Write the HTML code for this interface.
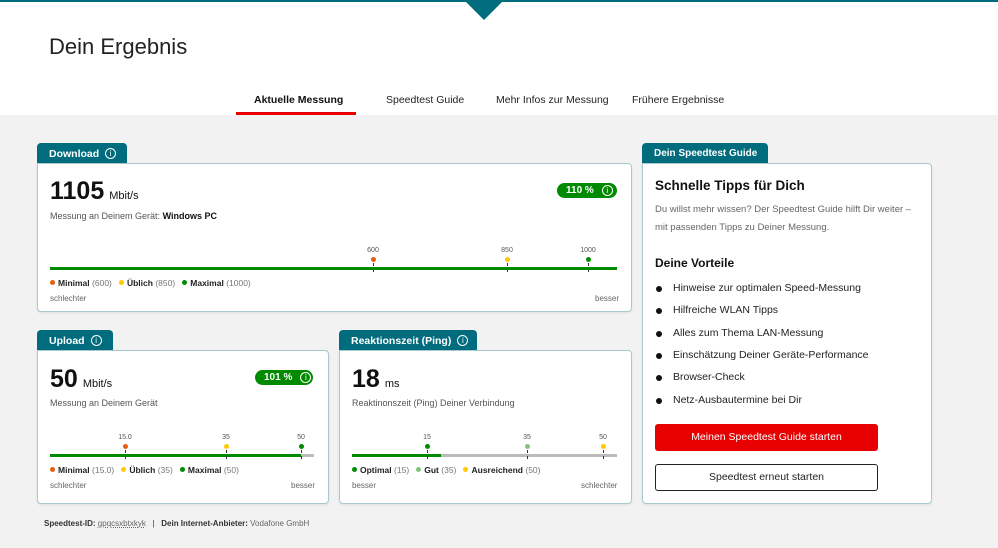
<!DOCTYPE html>
<html><head><meta charset="utf-8"><style>
*{margin:0;padding:0;box-sizing:border-box}
body{width:998px;height:548px;position:relative;background:#fff;font-family:"Liberation Sans",sans-serif;color:#222;overflow:hidden}
.a{position:absolute;white-space:nowrap}
.tab{position:absolute;background:#006c7d;color:#fff;font-weight:bold;font-size:10.5px;height:21px;display:flex;align-items:center;padding-left:12px;border-radius:4px 4px 0 0;white-space:nowrap}
.card{position:absolute;background:#fff;border:1px solid #a9c9cd;border-radius:0 4px 4px 4px;box-shadow:0 1px 2px rgba(0,0,0,.08)}
.i{display:inline-block;width:11px;height:11px;border:1px solid currentColor;border-radius:50%;font-size:8px;line-height:9px;text-align:center;font-weight:normal;margin-left:6px;flex:none}
.big{font-size:25px;font-weight:bold;color:#111}
.unit{font-size:11px;font-weight:normal;margin-left:5px}
.sub{font-size:9px;color:#555}
.badge{position:absolute;background:#008a00;color:#fff;border-radius:8px;font-size:10px;height:15px;display:flex;align-items:center;padding-left:9px;font-weight:bold;white-space:nowrap}
.lbl{font-size:7px;color:#555;transform:translateX(-50%)}
.dot{position:absolute;width:5px;height:5px;border-radius:50%}
.tick{position:absolute;width:1px;height:9px;border-left:1px dashed #333}
.leg{font-size:8.5px;color:#222}
.leg b{font-weight:bold}.leg span{color:#777}
.leg i{display:inline-block;width:5px;height:5px;border-radius:50%;margin-right:3px;vertical-align:1px}
.sm{font-size:8px;color:#666}
.li{font-size:10.5px;color:#222;left:673px}
.bul{position:absolute;left:656px;width:6px;height:6px;border-radius:50%;background:#111}
</style></head><body>
<div class="a" style="left:0;top:0;width:998px;height:2px;background:#006c7d"></div>
<div class="a" style="left:464px;top:0;width:0;height:0;border-left:20px solid transparent;border-right:20px solid transparent;border-top:20px solid #006c7d"></div>
<div class="a" style="left:49px;top:34px;font-size:22px;color:#222;font-weight:300">Dein Ergebnis</div>
<div class="a" style="left:254px;top:94px;font-size:10.5px;font-weight:bold;color:#111">Aktuelle Messung</div>
<div class="a" style="left:386px;top:94px;font-size:10.5px">Speedtest Guide</div>
<div class="a" style="left:496px;top:94px;font-size:10.5px">Mehr Infos zur Messung</div>
<div class="a" style="left:632px;top:94px;font-size:10.5px">Frühere Ergebnisse</div>
<div class="a" style="left:236px;top:112px;width:120px;height:3px;background:#e60000"></div>
<div class="a" style="left:0;top:115px;width:998px;height:433px;background:#f2f2f2"></div>

<!-- Download -->
<div class="tab" style="left:37px;top:143px;width:90px">Download<span class="i">i</span></div>
<div class="card" style="left:37px;top:163px;width:595px;height:149px"></div>
<div class="a big" style="left:50px;top:177px">1105<span class="unit">Mbit/s</span></div>
<div class="badge" style="left:557px;top:183px;width:60px">110 %<span class="i" style="margin-left:8px">i</span></div>
<div class="a sub" style="left:50px;top:211px">Messung an Deinem Gerät: <b style="color:#111">Windows PC</b></div>
<div class="a lbl" style="left:373px;top:247px">600</div>
<div class="a lbl" style="left:507px;top:247px">850</div>
<div class="a lbl" style="left:588px;top:247px">1000</div>
<div class="dot" style="left:371px;top:257px;background:#e85d0c"></div>
<div class="dot" style="left:505px;top:257px;background:#fecb00"></div>
<div class="dot" style="left:586px;top:257px;background:#008a00"></div>
<div class="tick" style="left:373px;top:263px"></div><div class="tick" style="left:507px;top:263px"></div><div class="tick" style="left:588px;top:263px"></div>
<div class="a" style="left:50px;top:267px;width:567px;height:3px;background:#008a00"></div>
<div class="a leg" style="left:50px;top:278px"><i style="background:#e85d0c"></i><b>Minimal</b> <span>(600)</span>&nbsp;&nbsp; <i style="background:#fecb00"></i><b>Üblich</b> <span>(850)</span>&nbsp;&nbsp; <i style="background:#008a00"></i><b>Maximal</b> <span>(1000)</span></div>
<div class="a sm" style="left:50px;top:294px">schlechter</div>
<div class="a sm" style="left:595px;top:294px">besser</div>

<!-- Upload -->
<div class="tab" style="left:37px;top:330px;width:76px">Upload<span class="i">i</span></div>
<div class="card" style="left:37px;top:350px;width:292px;height:154px"></div>
<div class="a big" style="left:50px;top:365px">50<span class="unit">Mbit/s</span></div>
<div class="badge" style="left:255px;top:370px;width:58px">101 %<span class="i" style="margin-left:8px">i</span></div>
<div class="a sub" style="left:50px;top:398px">Messung an Deinem Gerät</div>
<div class="a lbl" style="left:125px;top:434px">15.0</div>
<div class="a lbl" style="left:226px;top:434px">35</div>
<div class="a lbl" style="left:301px;top:434px">50</div>
<div class="dot" style="left:123px;top:444px;background:#e85d0c"></div>
<div class="dot" style="left:224px;top:444px;background:#fecb00"></div>
<div class="dot" style="left:299px;top:444px;background:#008a00"></div>
<div class="a" style="left:50px;top:454px;width:264px;height:3px;background:#bbb"></div>
<div class="a" style="left:50px;top:454px;width:251px;height:3px;background:#008a00"></div>
<div class="tick" style="left:125px;top:450px"></div><div class="tick" style="left:226px;top:450px"></div><div class="tick" style="left:301px;top:450px"></div>
<div class="a leg" style="left:50px;top:465px"><i style="background:#e85d0c"></i><b>Minimal</b> <span>(15.0)</span>&nbsp;&nbsp; <i style="background:#fecb00"></i><b>Üblich</b> <span>(35)</span>&nbsp;&nbsp; <i style="background:#008a00"></i><b>Maximal</b> <span>(50)</span></div>
<div class="a sm" style="left:50px;top:481px">schlechter</div>
<div class="a sm" style="left:291px;top:481px">besser</div>

<!-- Ping -->
<div class="tab" style="left:339px;top:330px;width:138px">Reaktionszeit (Ping)<span class="i">i</span></div>
<div class="card" style="left:339px;top:350px;width:293px;height:154px"></div>
<div class="a big" style="left:352px;top:365px">18<span class="unit">ms</span></div>
<div class="a sub" style="left:352px;top:398px">Reaktinonszeit (Ping) Deiner Verbindung</div>
<div class="a lbl" style="left:427px;top:434px">15</div>
<div class="a lbl" style="left:527px;top:434px">35</div>
<div class="a lbl" style="left:603px;top:434px">50</div>
<div class="dot" style="left:425px;top:444px;background:#008a00"></div>
<div class="dot" style="left:525px;top:444px;background:#7fc47f"></div>
<div class="dot" style="left:601px;top:444px;background:#fecb00"></div>
<div class="a" style="left:352px;top:454px;width:265px;height:3px;background:#bbb"></div>
<div class="a" style="left:352px;top:454px;width:89px;height:3px;background:#008a00"></div>
<div class="tick" style="left:427px;top:450px"></div><div class="tick" style="left:527px;top:450px"></div><div class="tick" style="left:603px;top:450px"></div>
<div class="a leg" style="left:352px;top:465px"><i style="background:#008a00"></i><b>Optimal</b> <span>(15)</span>&nbsp;&nbsp; <i style="background:#7fc47f"></i><b>Gut</b> <span>(35)</span>&nbsp;&nbsp; <i style="background:#fecb00"></i><b>Ausreichend</b> <span>(50)</span></div>
<div class="a sm" style="left:352px;top:481px">besser</div>
<div class="a sm" style="left:581px;top:481px">schlechter</div>

<!-- Guide -->
<div class="tab" style="left:642px;top:143px;width:126px;font-size:10px">Dein Speedtest Guide</div>
<div class="card" style="left:642px;top:163px;width:290px;height:341px"></div>
<div class="a" style="left:655px;top:178px;font-size:13.5px;font-weight:bold;color:#111">Schnelle Tipps für Dich</div>
<div class="a" style="left:655px;top:201px;font-size:9.5px;color:#666;line-height:18px;white-space:normal;width:270px">Du willst mehr wissen? Der Speedtest Guide hilft Dir weiter – mit passenden Tipps zu Deiner Messung.</div>
<div class="a" style="left:655px;top:256px;font-size:12px;font-weight:bold;color:#111">Deine Vorteile</div>
<div class="bul" style="top:286px"></div><div class="a li" style="top:282px">Hinweise zur optimalen Speed-Messung</div>
<div class="bul" style="top:308px"></div><div class="a li" style="top:304px">Hilfreiche WLAN Tipps</div>
<div class="bul" style="top:331px"></div><div class="a li" style="top:327px">Alles zum Thema LAN-Messung</div>
<div class="bul" style="top:353px"></div><div class="a li" style="top:349px">Einschätzung Deiner Geräte-Performance</div>
<div class="bul" style="top:375px"></div><div class="a li" style="top:371px">Browser-Check</div>
<div class="bul" style="top:398px"></div><div class="a li" style="top:394px">Netz-Ausbautermine bei Dir</div>
<div class="a" style="left:655px;top:424px;width:223px;height:27px;background:#e60000;border-radius:3px;color:#fff;font-size:10.5px;text-align:center;line-height:27px">Meinen Speedtest Guide starten</div>
<div class="a" style="left:655px;top:464px;width:223px;height:27px;border:1.5px solid #222;border-radius:3px;font-size:10.5px;text-align:center;line-height:24px;background:#fff">Speedtest erneut starten</div>

<div class="a" style="left:44px;top:519px;font-size:8px;color:#333"><b>Speedtest-ID:</b> <span style="color:#666;text-decoration:underline dotted">gpqcsxbtxkyk</span>&nbsp;&nbsp; | &nbsp;&nbsp;<b>Dein Internet-Anbieter:</b> <span style="color:#666">Vodafone GmbH</span></div>
</body></html>
